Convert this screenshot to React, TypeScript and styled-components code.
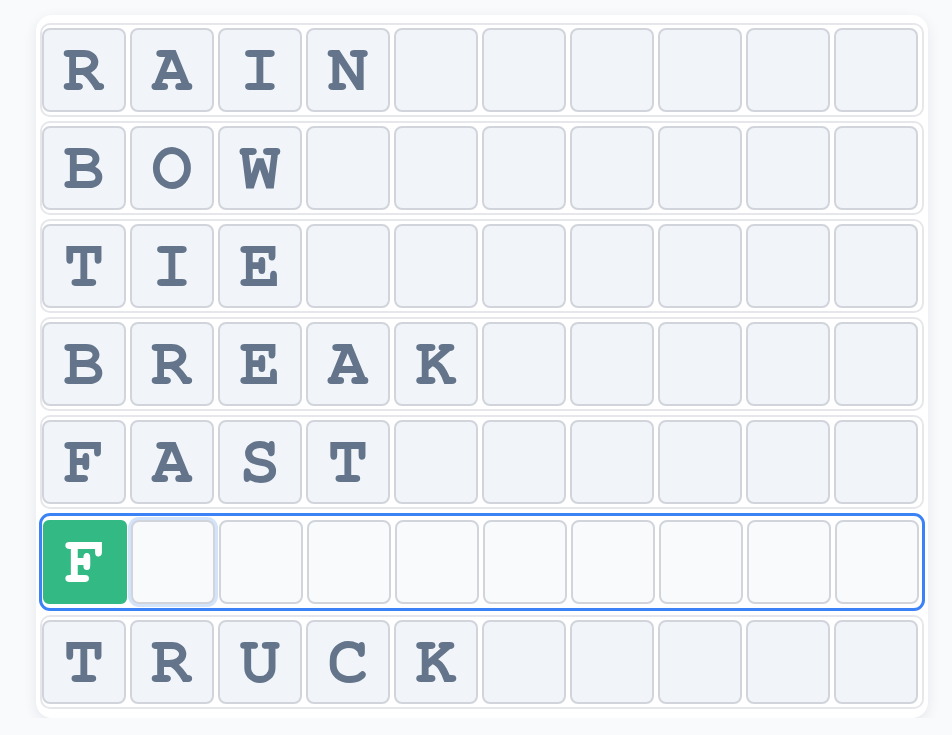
import React, { FC } from 'react';
import styled, { createGlobalStyle, css } from 'styled-components';

const GlobalStyle = createGlobalStyle`
  html, body {
    margin: 0;
    padding: 0;
    background: #f8fafc;
  }
`;

const Page = styled.div`
  padding: 15px 0 0 36px;
`;

const Board = styled.div`
  width: 884px;
  padding: 8px 4px 9px;
  background: #ffffff;
  border-radius: 16px;
  box-shadow: 0 4px 14px rgba(15, 23, 42, 0.08);
  display: flex;
  flex-direction: column;
  gap: 4px;
`;

const Row = styled.div<{ $active?: boolean }>`
  display: flex;
  gap: 4px;
  padding: 3px 0;
  border: 2px solid #e5e7eb;
  border-radius: 10px;
  ${(p) =>
    p.$active &&
    css`
      margin: 0 -1px;
      padding: 4px 1px;
      border: 3px solid #3b82f6;
      border-radius: 11px;
    `}
`;

const Tile = styled.div<{ $filled?: boolean; $current?: boolean; $focus?: boolean }>`
  box-sizing: border-box;
  width: 84px;
  height: 84px;
  flex: none;
  display: flex;
  align-items: center;
  justify-content: center;
  border: 2px solid #d1d5db;
  border-radius: 8px;
  background: #f1f5f9;
  color: #64748b;
  font-family: 'FreeMono', 'Courier New', monospace;
  font-weight: 700;
  font-size: 68px;
  line-height: 1;
  ${(p) =>
    p.$current &&
    css`
      background: #f8fafc;
    `}
  ${(p) =>
    p.$filled &&
    css`
      background: #33b983;
      border-color: #33b983;
      color: #ffffff;
      border-radius: 6px;
    `}
  ${(p) =>
    p.$focus &&
    css`
      box-shadow: 0 0 0 3px #d3e3fa;
    `}
`;

const COLS = 10;

const rows: { word: string; active?: boolean }[] = [
  { word: 'RAIN' },
  { word: 'BOW' },
  { word: 'TIE' },
  { word: 'BREAK' },
  { word: 'FAST' },
  { word: 'F', active: true },
  { word: 'TRUCK' },
];

const App: FC = () => (
  <>
    <GlobalStyle />
    <Page>
      <Board>
        {rows.map((row, r) => (
          <Row key={r} $active={row.active}>
            {Array.from({ length: COLS }).map((_, i) => {
              const letter = row.word[i] || '';
              return (
                <Tile
                  key={i}
                  $current={row.active}
                  $filled={row.active && !!letter}
                  $focus={row.active && i === row.word.length}
                >
                  {letter}
                </Tile>
              );
            })}
          </Row>
        ))}
      </Board>
    </Page>
  </>
);

export default App;
